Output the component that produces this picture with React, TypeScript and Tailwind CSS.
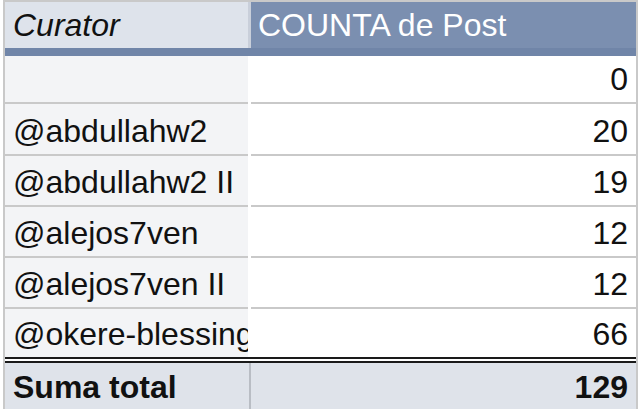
import React from "react";

const rows: { name: string; value: number; h: string }[] = [
  { name: "", value: 0, h: "h-[48px]" },
  { name: "@abdullahw2", value: 20, h: "h-[52px]" },
  { name: "@abdullahw2 II", value: 19, h: "h-[51px]" },
  { name: "@alejos7ven", value: 12, h: "h-[51px]" },
  { name: "@alejos7ven II", value: 12, h: "h-[51px]" },
  { name: "@okere-blessing", value: 66, h: "h-[48px]" },
];

export default function App() {
  return (
    <div
      className="w-[640px] h-[409px] overflow-hidden bg-white text-[32px] leading-[32px] text-[#111]"
      style={{ fontFamily: '"Liberation Sans", Arial, sans-serif' }}
    >
      <div className="ml-[3px] w-[635px] border-l-2 border-r-2 border-t-2 border-[#c9c9c9]">
        {/* Header */}
        <div className="flex h-[54px] border-b-8 border-[#7085a8]">
          <div className="w-[243px] bg-[#dee3eb] flex items-end pb-[7px] pl-[8px] italic">
            Curator
          </div>
          <div className="w-[3px] bg-[#c9cfda]" />
          <div className="flex-1 bg-[#7b8fb0] flex items-end pb-[7px] pl-[7px] text-white">
            COUNTA de Post
          </div>
        </div>
        {/* Body */}
        {rows.map((r, i) => (
          <div key={i} className={`flex ${r.h}`}>
            <div
              className={`w-[243px] bg-[#f3f4f6] flex items-end pb-[7px] pl-[8px] overflow-hidden whitespace-nowrap ${
                i < rows.length - 1 ? "border-b-2 border-[#c9c9c9]" : ""
              }`}
            >
              {r.name}
            </div>
            <div className="w-[3px] bg-white" />
            <div
              className={`flex-1 bg-white flex items-end justify-end pb-[7px] pr-[8px] ${
                i < rows.length - 1 ? "border-b-2 border-[#c9c9c9]" : ""
              }`}
            >
              {r.value}
            </div>
          </div>
        ))}
        {/* Double line */}
        <div className="h-[6px] border-t-2 border-b-2 border-[#1a1a1a] bg-white" />
        {/* Total */}
        <div className="flex h-[46px] font-bold">
          <div className="w-[244px] bg-[#dfe3ea] flex items-end pb-[6px] pl-[8px]">
            Suma total
          </div>
          <div className="w-[2px] bg-[#b9bdc4]" />
          <div className="flex-1 bg-[#dfe3ea] flex items-end justify-end pb-[6px] pr-[8px]">
            129
          </div>
        </div>
      </div>
    </div>
  );
}
